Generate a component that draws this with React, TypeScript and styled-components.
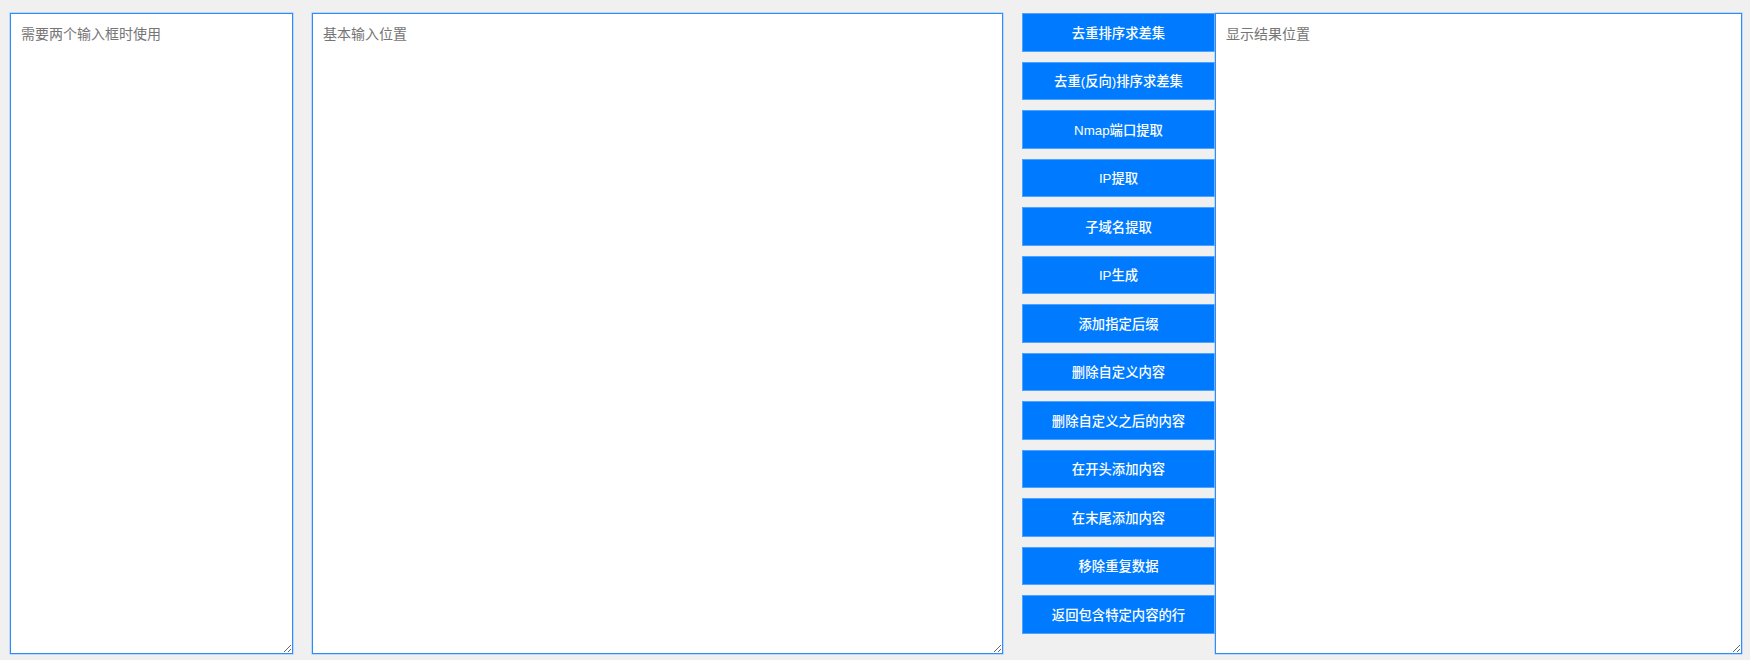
import React from "react";
import styled, { createGlobalStyle } from "styled-components";

const GlobalStyle = createGlobalStyle`
  html, body {
    margin: 0;
    padding: 0;
    background: #f0f0f0;
    font-family: "Liberation Sans", "Noto Sans CJK SC", sans-serif;
  }
`;

const Page = styled.div`
  display: flex;
  align-items: flex-start;
  padding: 13px 8px 0 10px;
  height: 660px;
  box-sizing: border-box;
`;

const TextBox = styled.textarea<{ $width: number; $gapRight: number }>`
  width: ${(p) => p.$width}px;
  height: 641px;
  margin-right: ${(p) => p.$gapRight}px;
  box-sizing: border-box;
  border: 1px solid #2f8cff;
  box-shadow: 0 0 0 0.5px #8cc2ff;
  border-radius: 0;
  background: #ffffff;
  padding: 10px;
  font-family: "Liberation Sans", "Noto Sans CJK SC", sans-serif;
  font-size: 14px;
  line-height: 20px;
  color: #333;
  outline: none;
  flex-shrink: 0;
  &::placeholder {
    color: #757575;
  }
`;

const ButtonColumn = styled.div`
  display: flex;
  flex-direction: column;
  gap: 10px;
  width: 193px;
  flex-shrink: 0;
`;

const ActionButton = styled.button`
  height: 38.5px;
  width: 100%;
  box-sizing: border-box;
  background: #007bff;
  color: #ffffff;
  border: 1px solid #4ea3ff;
  border-radius: 0;
  font-family: "Liberation Sans", "Noto Sans CJK SC", sans-serif;
  font-size: 13.33px;
  font-weight: 500;
  cursor: pointer;
  padding: 0 6px;
`;

const actions = [
  "去重排序求差集",
  "去重(反向)排序求差集",
  "Nmap端口提取",
  "IP提取",
  "子域名提取",
  "IP生成",
  "添加指定后缀",
  "删除自定义内容",
  "删除自定义之后的内容",
  "在开头添加内容",
  "在末尾添加内容",
  "移除重复数据",
  "返回包含特定内容的行",
];

export default function App() {
  return (
    <>
      <GlobalStyle />
      <Page>
        <TextBox $width={283} $gapRight={19} placeholder="需要两个输入框时使用" />
        <TextBox $width={691} $gapRight={19} placeholder="基本输入位置" />
        <ButtonColumn>
          {actions.map((a) => (
            <ActionButton key={a}>{a}</ActionButton>
          ))}
        </ButtonColumn>
        <TextBox $width={527} $gapRight={0} placeholder="显示结果位置" />
      </Page>
    </>
  );
}
